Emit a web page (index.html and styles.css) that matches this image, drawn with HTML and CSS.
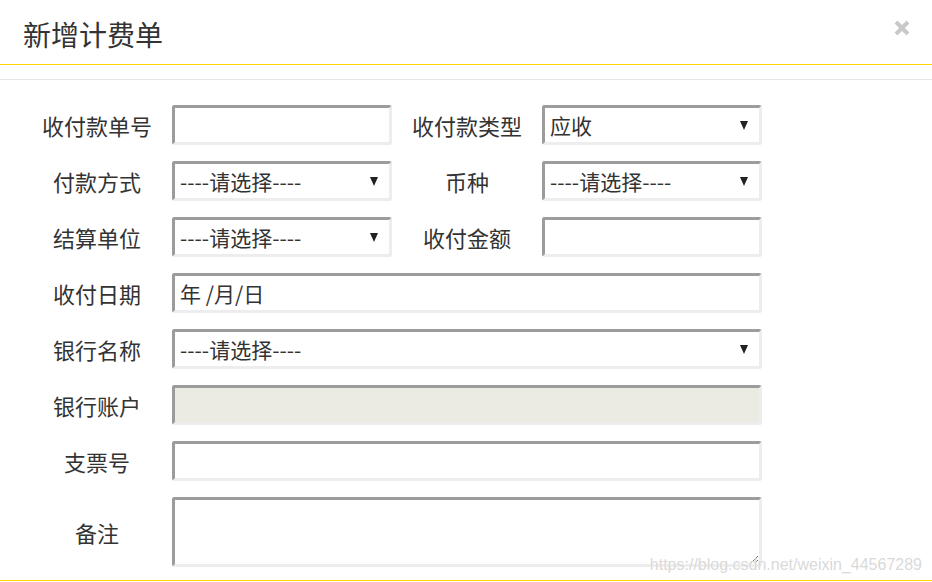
FILE: index.html
```html
<!DOCTYPE html>
<html lang="zh-CN">
<head>
<meta charset="utf-8">
<title>新增计费单</title>
<link rel="stylesheet" href="styles.css">
</head>
<body>
<div class="dialog">
  <div class="dialog-header">
    <h1 class="dialog-title">新增计费单</h1>
    <button class="close" type="button" aria-label="关闭">
      <svg width="16" height="16" viewBox="0 0 16 16"><path d="M2 2 L14 14 M14 2 L2 14" stroke="#c9c9c9" stroke-width="4" stroke-linecap="butt"/></svg>
    </button>
  </div>
  <div class="dialog-divider"></div>
  <form class="form">
    <label class="label">收付款单号</label>
    <input class="field" type="text">
    <label class="label">收付款类型</label>
    <span class="select-wrap"><select class="field select"><option>应收</option></select></span>

    <label class="label">付款方式</label>
    <span class="select-wrap"><select class="field select"><option>----请选择----</option></select></span>
    <label class="label">币种</label>
    <span class="select-wrap"><select class="field select"><option>----请选择----</option></select></span>

    <label class="label">结算单位</label>
    <span class="select-wrap"><select class="field select"><option>----请选择----</option></select></span>
    <label class="label">收付金额</label>
    <input class="field" type="text">

    <label class="label">收付日期</label>
    <input class="field wide" type="text" value="年 /月/日">

    <label class="label">银行名称</label>
    <span class="select-wrap wide"><select class="field select"><option>----请选择----</option></select></span>

    <label class="label">银行账户</label>
    <input class="field wide" type="text" disabled>

    <label class="label">支票号</label>
    <input class="field wide" type="text">

    <label class="label">备注</label>
    <textarea class="field wide area"></textarea>
  </form>
  <div class="watermark">https://blog.csdn.net/weixin_44567289</div>
</div>
</body>
</html>
```

FILE: styles.css
```css
html, body {
  margin: 0;
  padding: 0;
  background: #fff;
}
body {
  font-family: "Microsoft YaHei", "Noto Sans CJK SC", sans-serif;
  color: #333;
}
.dialog {
  position: relative;
  width: 932px;
  height: 580px;
  border-bottom: 1px solid #ffd400;
}
.dialog-header {
  height: 65px;
  box-sizing: border-box;
  border-bottom: 1px solid #ffd400;
  display: flex;
  align-items: center;
  justify-content: space-between;
  padding: 0 22px 0 23px;
}
.dialog-title {
  margin: 0;
  padding-top: 5px;
  font-size: 28px;
  font-weight: normal;
  line-height: 1.4;
  color: #333;
}
.close {
  border: 0;
  background: none;
  padding: 0;
  margin-top: -9px;
  width: 16px;
  height: 16px;
  display: block;
  cursor: pointer;
}
.close svg { display: block; }
.dialog-divider {
  margin-top: 14px;
  height: 1px;
  background: #e5e5e5;
}
.form {
  display: grid;
  grid-template-columns: 130px 220px 130px 220px;
  column-gap: 10px;
  row-gap: 16px;
  padding: 25px 0 0 32px;
  align-items: center;
}
.label {
  text-align: center;
  font-size: 22px;
  line-height: 1;
  color: #333;
}
.field {
  box-sizing: border-box;
  width: 100%;
  height: 40px;
  margin: 0;
  padding: 0 5px;
  font-family: "Microsoft YaHei", "Noto Sans CJK SC", sans-serif;
  font-size: 21px;
  color: #333;
  background: #fff;
  border-style: solid;
  border-width: 3px;
  border-color: #9c9c9c #ededed #ededed #9c9c9c;
  border-radius: 3px;
  outline: none;
}
.field:disabled {
  background: #ebebe4;
}
.wide {
  grid-column: span 3;
}
.select-wrap {
  position: relative;
  display: block;
}
.select {
  -webkit-appearance: none;
  appearance: none;
  padding-right: 30px;
}
.select-wrap::after {
  content: "";
  position: absolute;
  right: 14px;
  top: 16px;
  width: 0;
  height: 0;
  border-left: 4px solid transparent;
  border-right: 4px solid transparent;
  border-top: 9px solid #222;
  pointer-events: none;
}
.area {
  height: 70px;
  resize: vertical;
  padding: 6px;
}
.watermark {
  position: absolute;
  right: 10px;
  bottom: 6px;
  font-family: "Liberation Sans", Arial, sans-serif;
  font-size: 16px;
  color: rgba(200, 200, 200, 0.7);
  text-shadow: 0 0 1px #fff;
  pointer-events: none;
}
```
